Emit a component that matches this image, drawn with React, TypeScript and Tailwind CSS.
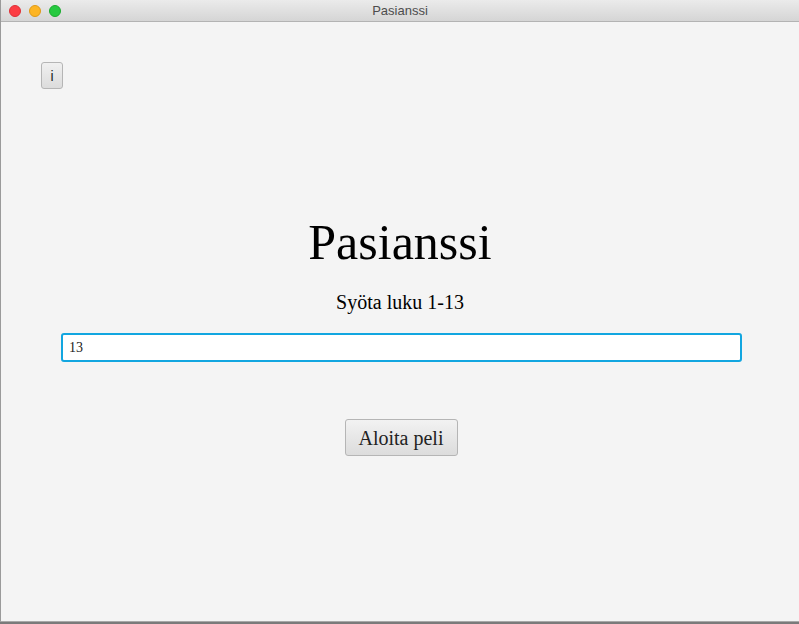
import { useState } from "react";

function TrafficLights() {
  return (
    <div className="flex items-center gap-[8px] pl-[8px]">
      <span className="w-[12px] h-[12px] rounded-full bg-[#fc3d44] border border-[#de2f36]" />
      <span className="w-[12px] h-[12px] rounded-full bg-[#fdb524] border border-[#df9a17]" />
      <span className="w-[12px] h-[12px] rounded-full bg-[#26c940] border border-[#1aab2d]" />
    </div>
  );
}

export default function App() {
  const [value, setValue] = useState("13");

  return (
    <div className="w-[799px] h-[624px] bg-[#7a7a7a] overflow-hidden" style={{ fontFamily: '"Liberation Serif", serif' }}>
      <div className="w-[799px] h-[622px] flex flex-col bg-[#f4f4f4] border-l border-[#9a9a9a] border-b border-b-[#a8a8a8]">
        <div className="relative h-[22px] shrink-0 flex items-center bg-gradient-to-b from-[#ebebeb] to-[#d5d5d5] border-b border-[#b3b3b3]">
          <TrafficLights />
          <div
            className="absolute inset-0 flex items-center justify-center text-[13px] text-[#4d4d4d]"
            style={{ fontFamily: '"Liberation Sans", Arial, sans-serif' }}
          >
            Pasianssi
          </div>
        </div>

        <div className="flex flex-col">
          <div className="pl-[40px] pt-[40px]">
            <button className="w-[22px] h-[27px] rounded-[3px] border border-[#b5b5b5] bg-gradient-to-b from-[#f0f0f0] to-[#dcdcdc] text-[14px] text-[#222] leading-none" style={{ fontFamily: '"Liberation Sans", Arial, sans-serif' }}>
              i
            </button>
          </div>

          <h1 className="mt-[128px] h-[50px] text-[50px] leading-none text-center text-black">Pasianssi</h1>
          <p className="mt-[25px] h-[20px] text-[20px] leading-none text-center text-black">Syöta luku 1-13</p>

          <div className="mt-[21px] pl-[60px]">
            <input
              value={value}
              onChange={(e) => setValue(e.target.value)}
              className="w-[681px] h-[29px] px-[6px] rounded-[3px] bg-white border-2 border-[#12a6e0] text-[14px] text-[#222] outline-none"
              style={{ fontFamily: '"Liberation Serif", serif' }}
            />
          </div>

          <div className="mt-[57px] flex justify-center pl-[2px]">
            <button className="w-[113px] h-[37px] rounded-[3px] border border-[#b5b5b5] bg-gradient-to-b from-[#f2f2f2] to-[#dcdcdc] text-[20px] text-[#222] leading-none">
              Aloita peli
            </button>
          </div>
        </div>
      </div>
    </div>
  );
}
